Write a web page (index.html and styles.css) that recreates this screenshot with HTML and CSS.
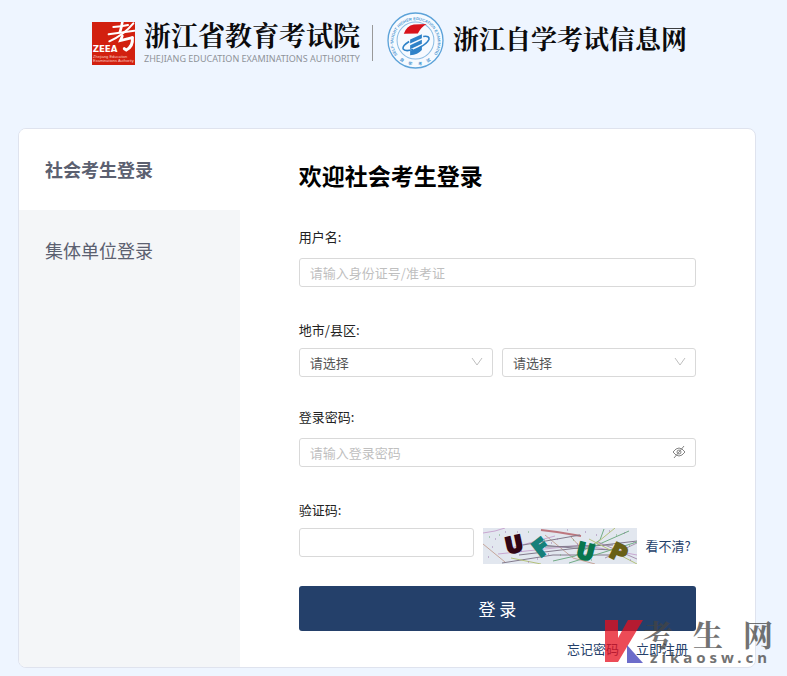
FILE: index.html
```html
<!DOCTYPE html>
<html lang="zh-CN">
<head>
<meta charset="utf-8">
<meta name="viewport" content="width=device-width, initial-scale=1">
<title>浙江自学考试信息网</title>
<link rel="stylesheet" href="styles.css">
</head>
<body>
<header class="header">
  <svg class="zeea" viewBox="0 0 129 129" aria-hidden="true">
    <rect width="129" height="129" fill="#d2200f"/>
    <g fill="none" stroke="#fff" stroke-linecap="round">
      <path d="M64 15 Q90 14 108 9" stroke-width="6"/>
      <path d="M91 0 Q88 18 84 30" stroke-width="8"/>
      <path d="M50 37 Q84 32 127 26" stroke-width="6"/>
      <path d="M124 4 Q96 38 52 58" stroke-width="6"/>
      <path d="M91 42 L85 56 L121 47" stroke-width="8"/>
      <path d="M121 47 Q124 73 103 84 Q100 82 97 80" stroke-width="9"/>
    </g>
    <text class="zeea-name" x="2" y="89">ZEEA</text>
    <text class="zeea-small" x="3" y="107">Zhejiang Education</text>
    <text class="zeea-small" x="3" y="121">Examinations Authority</text>
  </svg>
  <div class="authority">
    <span class="authority-cn">浙江省教育考试院</span>
    <span class="authority-en">ZHEJIANG EDUCATION EXAMINATIONS AUTHORITY</span>
  </div>
  <span class="divider"></span>
  <svg class="seal" viewBox="0 0 170 170" aria-hidden="true">
    <defs>
      <path id="arc-top" d="M31 128 A66 66 0 1 1 139 128"/>
      <path id="arc-bottom" d="M24 128 A74 74 0 0 0 146 128"/>
    </defs>
    <circle cx="85" cy="85" r="82" fill="#f6faff" stroke="#5da3d9" stroke-width="4"/>
    <circle cx="85" cy="85" r="55" fill="#f6faff" stroke="#8bbce3" stroke-width="3"/>
    <text class="seal-en"><textPath href="#arc-top">SELF-TAUGHT HIGHER EDUCATION EXAMINATIONS</textPath></text>
    <g class="seal-cn">
      <text><textPath href="#arc-bottom" startOffset="14%">自</textPath></text>
      <text><textPath href="#arc-bottom" startOffset="34%">学</textPath></text>
      <text><textPath href="#arc-bottom" startOffset="56%">考</textPath></text>
      <text><textPath href="#arc-bottom" startOffset="76%">试</textPath></text>
    </g>
    <path d="M50 65 Q58 41 80 37 L118 36 Q102 45 92 64Z" fill="#d8121b"/>
    <path d="M69 82 L104 66 V78 L69 94Z M69 99 L104 83 V95 L69 111Z M69 116 L104 100 V113 Q92 127 69 129Z" fill="#2e82c8"/>
    <path d="M108 73 Q128 70 125 82 Q119 95 98 105 M66 88 Q45 101 48 110 Q53 119 78 112" fill="none" stroke="#2e82c8" stroke-width="5"/>
  </svg>
  <h1 class="site-name">浙江自学考试信息网</h1>
</header>

<main class="card">
  <nav class="tabs">
    <a class="tab tab-active" href="#social">社会考生登录</a>
    <a class="tab" href="#group">集体单位登录</a>
  </nav>
  <form class="login" id="social">
    <h2 class="title">欢迎社会考生登录</h2>

    <div class="field">
      <label class="label" for="user">用户名:</label>
      <input class="control" id="user" type="text" placeholder="请输入身份证号/准考证">
    </div>

    <div class="field field-tight">
      <label class="label" for="city">地市/县区:</label>
      <div class="row">
        <div class="select">
          <select class="control" id="city"><option>请选择</option></select>
          <svg class="chevron" viewBox="0 0 12 12" aria-hidden="true"><path d="M1 2 L6 9 L11 2"/></svg>
        </div>
        <div class="select">
          <select class="control" id="district" aria-label="县区"><option>请选择</option></select>
          <svg class="chevron" viewBox="0 0 12 12" aria-hidden="true"><path d="M1 2 L6 9 L11 2"/></svg>
        </div>
      </div>
    </div>

    <div class="field">
      <label class="label" for="password">登录密码:</label>
      <div class="password">
        <input class="control" id="password" type="password" placeholder="请输入登录密码">
        <button class="eye" type="button" aria-label="显示密码">
          <svg viewBox="0 0 14 14" aria-hidden="true"><path d="M1 7 Q7 -1 13 7 Q7 15 1 7Z M12 1 L2 13"/><circle cx="7" cy="7" r="2"/></svg>
        </button>
      </div>
    </div>

    <div class="field field-tight">
      <label class="label" for="code">验证码:</label>
      <div class="row">
        <input class="control code" id="code" type="text">
        <svg class="captcha" viewBox="0 0 154 36" role="img" aria-label="验证码图片">
          <rect width="154" height="36" fill="#e2e7ef"/>
          <g fill="none" stroke-width="1">
            <path d="M0 5 L12 3 L22 0 M28 20 L72 8 M15 26 L100 17 L154 27" stroke="#c8a7d0"/>
            <path d="M0 16 L22 34 M62 7 L90 30 L112 36 M88 9 L100 22" stroke="#c5a59a"/>
            <path d="M58 2 L74 4 L98 8" stroke="#bd777f" stroke-width="2"/>
            <path d="M40 17 L97 7 M49 16 L90 20 L130 22 M62 19 L130 17 M36 27 L154 13 M19 35 L70 27 L130 27" stroke="#827a8c"/>
            <path d="M112 18 L146 3 M70 33 L92 28 L117 12 L121 1 M86 35 L154 14" stroke="#72ab85"/>
            <path d="M106 11 L154 36 M110 18 L132 0 M28 30 L58 36" stroke="#b4c17b"/>
            <path d="M122 30 L154 15 M115 14 L154 31" stroke="#a993b0"/>
          </g>
          <path d="M5 29h1M12 11h1M22 4h1M28 13h1M34 4h1M45 34h1M68 15h1M74 11h1M84 2h1M94 16h1M102 4h1M113 7h1M126 3h1M141 5h1M150 14h1M147 32h1M65 26h1M54 31h1M38 23h1M9 19h1" stroke="#9d79af" stroke-width="1"/>
          <path d="M16 7h1M26 22h1M45 4h1M61 12h1M77 27h1M90 12h1M108 32h1M133 7h1M146 18h1M6 9h1" stroke="#6caa76" stroke-width="1"/>
          <text class="captcha-char" fill="#310514" stroke="#310514" transform="translate(24 26) rotate(-12)">U</text>
          <text class="captcha-char" fill="#15807a" stroke="#15807a" transform="translate(57 30) rotate(-38)">F</text>
          <text class="captcha-char" fill="#08764d" stroke="#08764d" transform="translate(92 29) rotate(14)">U</text>
          <text class="captcha-char" fill="#696016" stroke="#696016" transform="translate(125 28) rotate(26)">P</text>
        </svg>
        <a class="link" href="#refresh">看不清?</a>
      </div>
    </div>

    <button class="submit" type="submit">登 录</button>
    <div class="links">
      <a class="link" href="#forgot">忘记密码</a>
      <a class="link" href="#register">立即注册</a>
    </div>
  </form>
</main>

<div class="watermark">
  <svg class="watermark-mark" viewBox="0 0 38 43" aria-hidden="true">
    <path d="M0 0 H13 V18 L23 0 H38 L13 42 H0Z" fill="#e60f1f"/>
    <path d="M22 25 L38 43 H22Z" fill="#3c3cb9"/>
  </svg>
  <div class="watermark-text">
    <span class="watermark-cn"><span>考</span><span>生</span><span>网</span></span>
    <span class="watermark-url">zikaosw.cn</span>
  </div>
</div>
</body>
</html>
```
FILE: styles.css
```css
* { box-sizing: border-box; }

body {
  position: relative;
  margin: 0;
  padding-bottom: 8px;
  background: #eef5ff;
  color: #222;
  font: 13px/20px "Noto Sans CJK SC", sans-serif;
}

a { color: inherit; text-decoration: none; }

.header {
  display: flex;
  align-items: center;
  height: 80px;
  margin-bottom: 48px;
  padding-left: 92px;
}

.zeea { width: 43px; height: 43px; margin-top: 6px; flex: none; }
.zeea-name { font: 800 26px "DejaVu Sans", sans-serif; fill: #fff; }
.zeea-small { font: 12px "Liberation Sans", sans-serif; fill: #f7c8c0; }

.authority { display: flex; flex-direction: column; margin: 4px 0 0 9px; white-space: nowrap; }
.authority-cn { font: bold 27px/34px "Noto Serif CJK SC", "Noto Sans CJK SC", serif; color: #0b0b0d; }
.authority-en { font: 9px/14px "Noto Sans", sans-serif; color: #8f9399; }

.divider { width: 1px; height: 36px; margin: 6px 14px 0 12px; background: #999; }

.seal { width: 57px; height: 57px; flex: none; }
.seal-en { font: bold 12px "Liberation Sans", sans-serif; fill: #4d98d2; }
.seal-cn { font: bold 12px "Noto Sans CJK SC", sans-serif; fill: #4d98d2; }

.site-name {
  margin: 0 0 4px 9px;
  font: bold 26px/36px "Noto Serif CJK SC", "Noto Sans CJK SC", serif;
  color: #0b0b0d;
  white-space: nowrap;
}

.card {
  display: flex;
  margin: 0 31px 0 18px;
  overflow: hidden;
  border: 1px solid #dfe3ee;
  border-radius: 8px;
  background: #fff;
}

.tabs { width: 30%; background: #f4f6f8; }
.tab {
  display: block;
  padding: 26px;
  color: #5b6070;
  font-size: 18px;
  line-height: 29px;
}
.tab-active { background: #fff; font-weight: bold; }

.login { flex: 1; padding: 31px 59px 8px; }
.title { margin: 0 0 37px; color: #000; font-size: 23px; line-height: 30px; }

.field { margin-bottom: 30px; }
.field-tight { margin: 33px 0 30px; }
.label { display: block; margin-bottom: 11px; }
.field-tight .label { margin-bottom: 8px; }

.control {
  display: block;
  width: 100%;
  height: 29px;
  padding: 0 10px;
  border: 1px solid #d9d9d9;
  border-radius: 3px;
  background: #fff;
  color: #555;
  font: inherit;
  appearance: none;
}
.control::placeholder { color: #bfbfbf; opacity: 1; }

.row { display: flex; gap: 9px; }
.select, .password { position: relative; flex: 1; }
.chevron {
  position: absolute;
  top: 8px;
  right: 10px;
  width: 12px;
  height: 12px;
  fill: none;
  stroke: #bfbfbf;
  pointer-events: none;
}

.eye {
  position: absolute;
  top: 7px;
  right: 10px;
  width: 14px;
  height: 14px;
  padding: 0;
  border: 0;
  background: none;
}
.eye svg { display: block; fill: none; stroke: #858585; }

.code { width: 44%; }
.captcha { width: 154px; height: 36px; flex: none; }
.captcha-char { font: bold 22px "DejaVu Sans", sans-serif; stroke-width: 2px; }
.link { color: #24406a; white-space: nowrap; }
.row .link { align-self: center; }

.submit {
  display: block;
  width: 100%;
  height: 45px;
  margin-top: -8px;
  border: 0;
  border-radius: 3px;
  background: #24406a;
  color: #fff;
  font: inherit;
  font-size: 17px;
}

.links { display: flex; justify-content: flex-end; gap: 17px; margin-top: 8px; padding-right: 8px; }

.watermark {
  position: absolute;
  right: 14px;
  bottom: 10px;
  display: flex;
  align-items: flex-start;
  width: 168px;
  opacity: 0.75;
  pointer-events: none;
}
.watermark-mark { width: 38px; height: 43px; margin-top: 2px; flex: none; }
.watermark-text { flex: 1; color: #444; }
.watermark-cn { display: flex; justify-content: space-between; font: bold 30px/30px "Noto Serif CJK SC", "Noto Sans CJK SC", serif; }
.watermark-url { display: block; padding-left: 7px; font: bold 15px/18px "Noto Sans", sans-serif; letter-spacing: 4px; }
```
